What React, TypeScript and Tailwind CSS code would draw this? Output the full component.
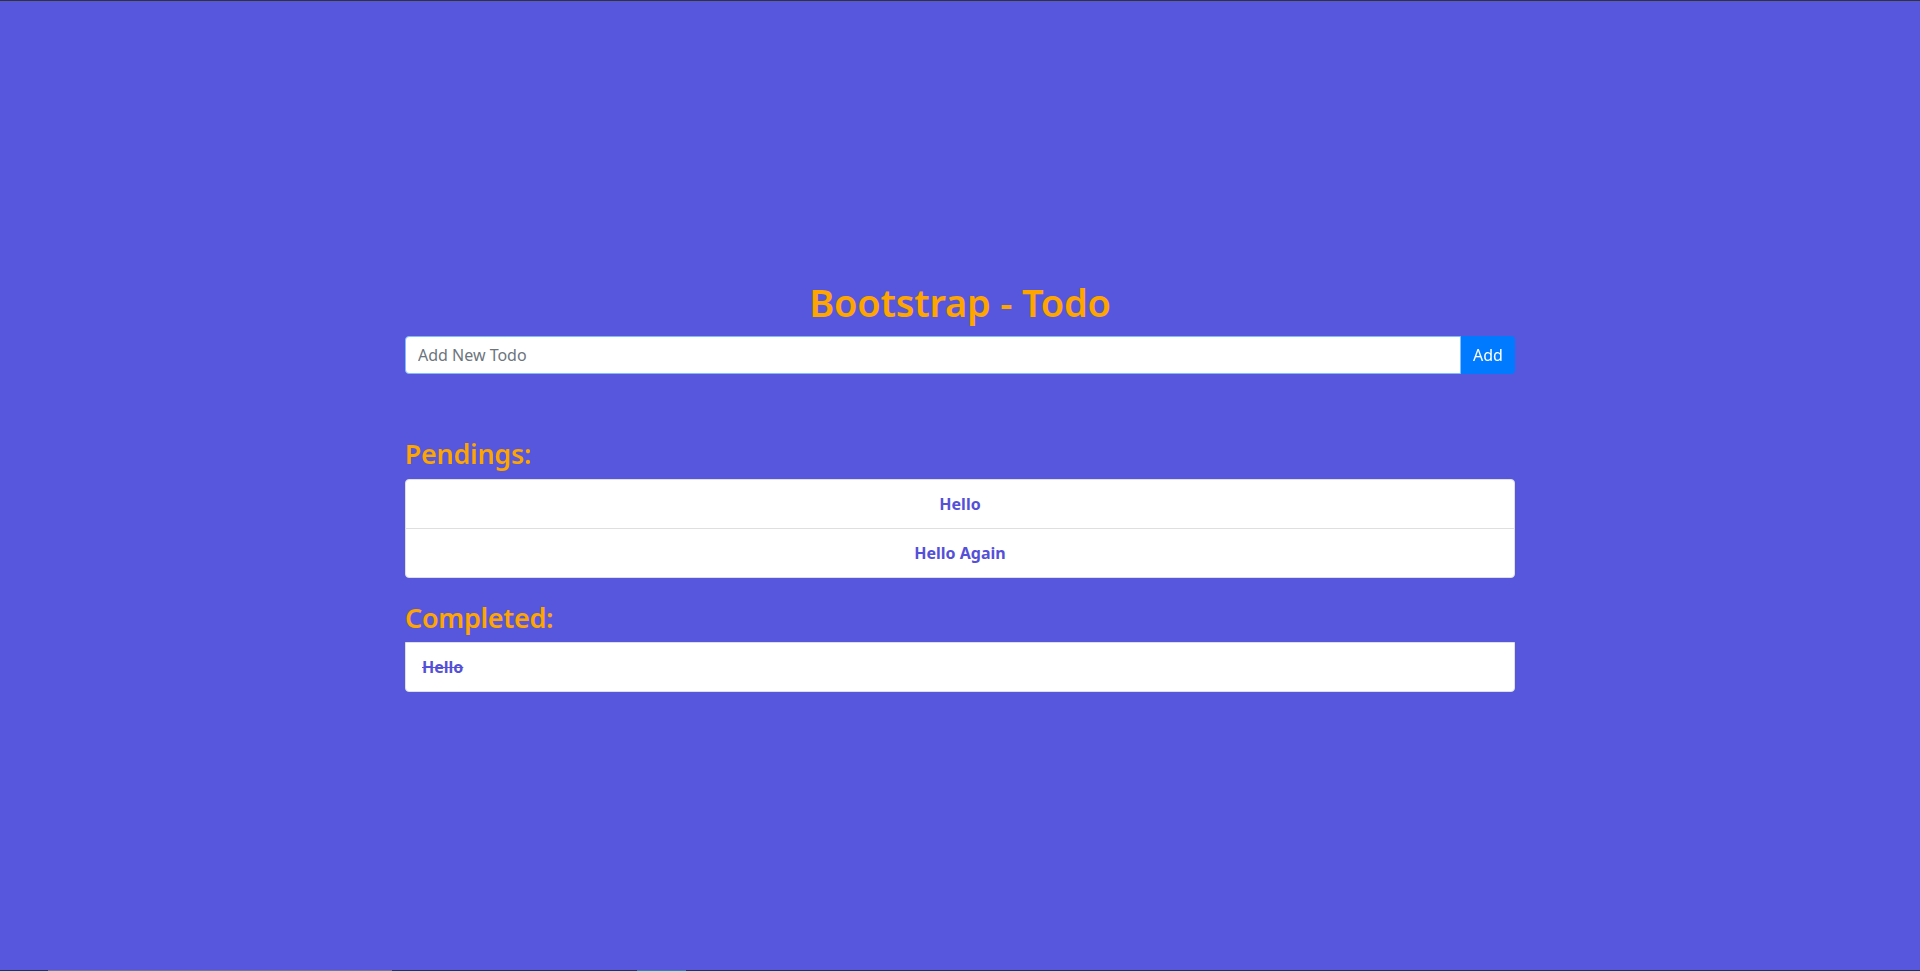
import React, { useState } from 'react';

const pendings = ['Hello', 'Hello Again'];
const completed = ['Hello'];

const App = () => {
  const [todo, setTodo] = useState('');

  return (
    <div
      className="flex h-[971px] flex-col border-t border-[#333333] bg-[#5757dd]"
      style={{ fontFamily: '"Noto Sans", "Open Sans", sans-serif' }}>
      <div className="mx-auto w-[1110px] pt-[277px]">
        <h1 className="mb-[10px] text-center text-[38px] font-semibold leading-[48px] tracking-[-0.2px] text-[#ffa500]">
          Bootstrap - Todo
        </h1>
        <div className="flex h-[38px]">
          <input
            autoFocus
            value={todo}
            onChange={(e) => setTodo(e.target.value)}
            placeholder="Add New Todo"
            className="h-full flex-1 rounded-l-[4px] border border-[#80bdff] bg-white px-3 text-base text-[#495057] outline-none placeholder:text-[#6c757d]"
          />
          <button className="h-full w-[54px] rounded-r-[4px] bg-[#007bff] text-base text-white">
            Add
          </button>
        </div>

        <h3 className="mt-[63px] mb-2 text-[27px] font-semibold leading-[34px] tracking-[-0.3px] text-[#ffa500]">
          Pendings:
        </h3>
        <ul className="overflow-hidden rounded-[4px] border border-[#dfdfdf] bg-white">
          {pendings.map((item, index) => (
            <li
              key={index}
              className="border-b border-[#dfdfdf] py-3 text-center text-base font-bold leading-6 text-[#5450d8] last:border-b-0">
              {item}
            </li>
          ))}
        </ul>

        <h3 className="mt-[23px] mb-[7px] text-[27px] font-semibold leading-[34px] tracking-[-0.3px] text-[#ffa500]">
          Completed:
        </h3>
        <ul className="overflow-hidden rounded-b-[4px] border border-[#dfdfdf] bg-white">
          {completed.map((item, index) => (
            <li
              key={index}
              className="px-4 py-3 text-base font-bold leading-6 text-[#5450d8] line-through">
              {item}
            </li>
          ))}
        </ul>
      </div>
      <div className="mt-auto flex h-px">
        <div className="w-[48px] bg-[#0e3b5c]" />
        <div className="w-[344px] bg-[#6b7d8e]" />
        <div className="w-[245px] bg-[#0e3b5c]" />
        <div className="w-[49px] bg-[#1a8fb0]" />
        <div className="flex-1 bg-[#0e3b5c]" />
      </div>
    </div>
  );
};

export default App;
